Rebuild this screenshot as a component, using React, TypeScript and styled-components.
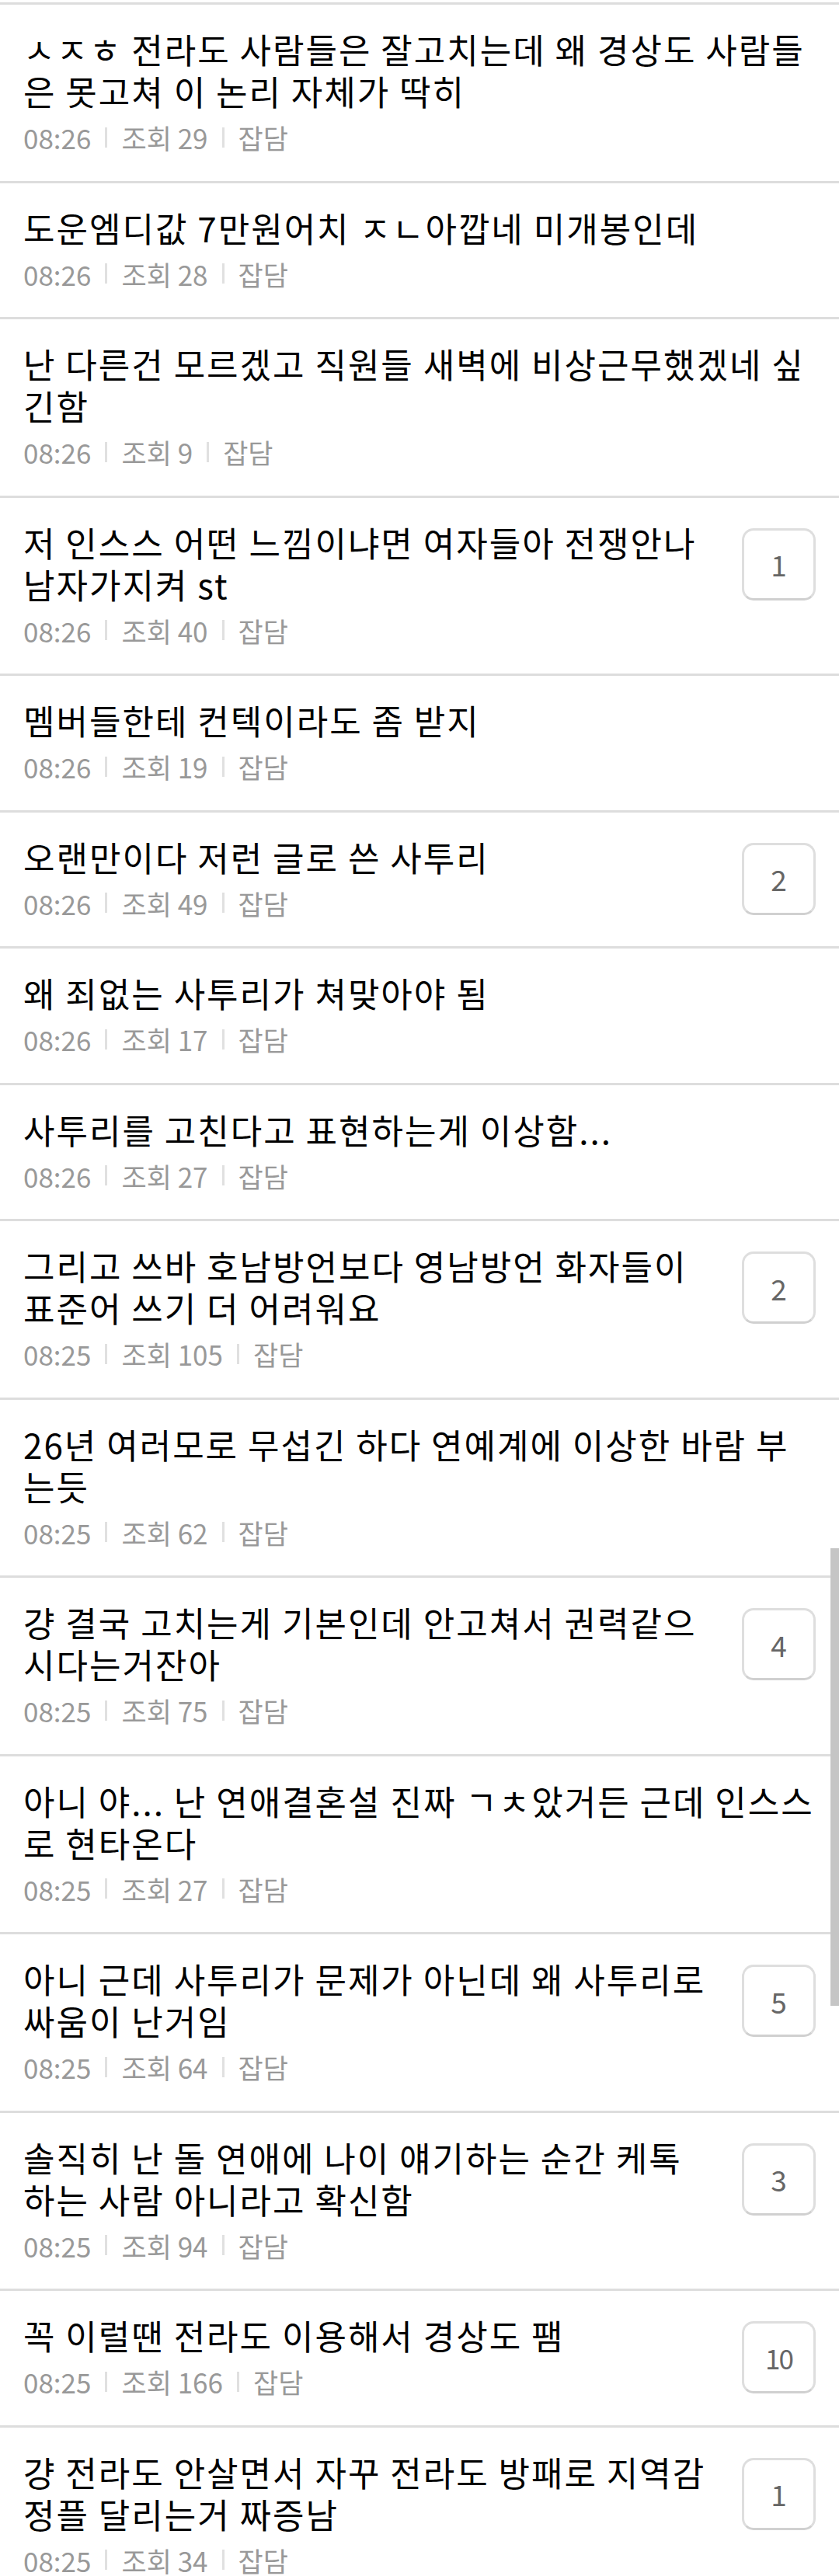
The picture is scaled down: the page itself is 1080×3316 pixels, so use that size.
import React from "react";
import styled, { createGlobalStyle } from "styled-components";

const GlobalStyle = createGlobalStyle`
  html, body {
    margin: 0;
    padding: 0;
    overflow: hidden;
    background: #fff;
  }
  body {
    font-family: "Noto Sans CJK KR", "Noto Sans", sans-serif;
  }
`;

type Post = {
  title: string;
  time: string;
  views: number;
  category: string;
  comments?: number;
};

const posts: Post[] = [
  { title: "ㅅㅈㅎ 전라도 사람들은 잘고치는데 왜 경상도 사람들은 못고쳐 이 논리 자체가 딱히", time: "08:26", views: 29, category: "잡담" },
  { title: "도운엠디값 7만원어치 ㅈㄴ아깝네 미개봉인데", time: "08:26", views: 28, category: "잡담" },
  { title: "난 다른건 모르겠고 직원들 새벽에 비상근무했겠네 싶긴함", time: "08:26", views: 9, category: "잡담" },
  { title: "저 인스스 어떤 느낌이냐면 여자들아 전쟁안나 남자가지켜 st", time: "08:26", views: 40, category: "잡담", comments: 1 },
  { title: "멤버들한테 컨텍이라도 좀 받지", time: "08:26", views: 19, category: "잡담" },
  { title: "오랜만이다 저런 글로 쓴 사투리", time: "08:26", views: 49, category: "잡담", comments: 2 },
  { title: "왜 죄없는 사투리가 쳐맞아야 됨", time: "08:26", views: 17, category: "잡담" },
  { title: "사투리를 고친다고 표현하는게 이상함...", time: "08:26", views: 27, category: "잡담" },
  { title: "그리고 쓰바 호남방언보다 영남방언 화자들이 표준어 쓰기 더 어려워요", time: "08:25", views: 105, category: "잡담", comments: 2 },
  { title: "26년 여러모로 무섭긴 하다 연예계에 이상한 바람 부는듯", time: "08:25", views: 62, category: "잡담" },
  { title: "걍 결국 고치는게 기본인데 안고쳐서 권력같으시다는거잔아", time: "08:25", views: 75, category: "잡담", comments: 4 },
  { title: "아니 야... 난 연애결혼설 진짜 ㄱㅊ았거든 근데 인스스로 현타온다", time: "08:25", views: 27, category: "잡담" },
  { title: "아니 근데 사투리가 문제가 아닌데 왜 사투리로 싸움이 난거임", time: "08:25", views: 64, category: "잡담", comments: 5 },
  { title: "솔직히 난 돌 연애에 나이 얘기하는 순간 케톡하는 사람 아니라고 확신함", time: "08:25", views: 94, category: "잡담", comments: 3 },
  { title: "꼭 이럴땐 전라도 이용해서 경상도 팸", time: "08:25", views: 166, category: "잡담", comments: 10 },
  { title: "걍 전라도 안살면서 자꾸 전라도 방패로 지역감정플 달리는거 짜증남", time: "08:25", views: 34, category: "잡담", comments: 1 },
];

const Page = styled.div`
  position: relative;
  width: 1080px;
  height: 3316px;
  overflow: hidden;
  padding-top: 3px;
  box-sizing: border-box;
  background: #fff;
`;

const List = styled.ul`
  list-style: none;
  margin: 0;
  padding: 0;
`;

const Row = styled.li<{ $hasBadge: boolean }>`
  display: flex;
  align-items: flex-start;
  border-top: 3px solid #dddddd;
  padding: 30px ${(p) => (p.$hasBadge ? "30px" : "26px")} 33.5px 30px;
`;

const Body = styled.div<{ $hasBadge: boolean }>`
  flex: 1;
  min-width: 0;
  padding-right: ${(p) => (p.$hasBadge ? "41px" : "0")};
`;

const Title = styled.div`
  font-size: 44px;
  letter-spacing: 2px;
  line-height: 54px;
  color: #000;
`;

const Meta = styled.div`
  display: flex;
  align-items: center;
  margin-top: 10px;
  height: 45px;
  font-size: 35px;
  line-height: 45px;
  color: #999;
`;

const Sep = styled.span`
  display: inline-block;
  width: 3px;
  height: 26px;
  margin: 0 18px;
  background: #e0e0e0;
`;

const Badge = styled.div<{ $wide?: boolean }>`
  flex: none;
  display: flex;
  align-items: center;
  justify-content: center;
  width: 95px;
  height: 93px;
  margin-top: 9px;
  box-sizing: border-box;
  border: 3px solid #dedede;
  border-bottom-color: #d0d0d0;
  border-radius: 15px;
  font-size: ${(p) => (p.$wide ? "35px" : "37px")};
  letter-spacing: ${(p) => (p.$wide ? "-2px" : "0")};
  color: #666;
`;

const Scrollbar = styled.div`
  position: absolute;
  right: 0;
  top: 1993px;
  width: 11px;
  height: 589px;
  background: #c5c5c5;
`;

export default function App() {
  return (
    <>
      <GlobalStyle />
      <Page>
        <List>
          {posts.map((post, i) => {
            const hasBadge = post.comments !== undefined;
            return (
              <Row key={i} $hasBadge={hasBadge}>
                <Body $hasBadge={hasBadge}>
                  <Title>{post.title}</Title>
                  <Meta>
                    <span>{post.time}</span>
                    <Sep />
                    <span>조회 {post.views}</span>
                    <Sep />
                    <span>{post.category}</span>
                  </Meta>
                </Body>
                {hasBadge && (
                  <Badge $wide={(post.comments ?? 0) >= 10}>{post.comments}</Badge>
                )}
              </Row>
            );
          })}
        </List>
        <Scrollbar />
      </Page>
    </>
  );
}
